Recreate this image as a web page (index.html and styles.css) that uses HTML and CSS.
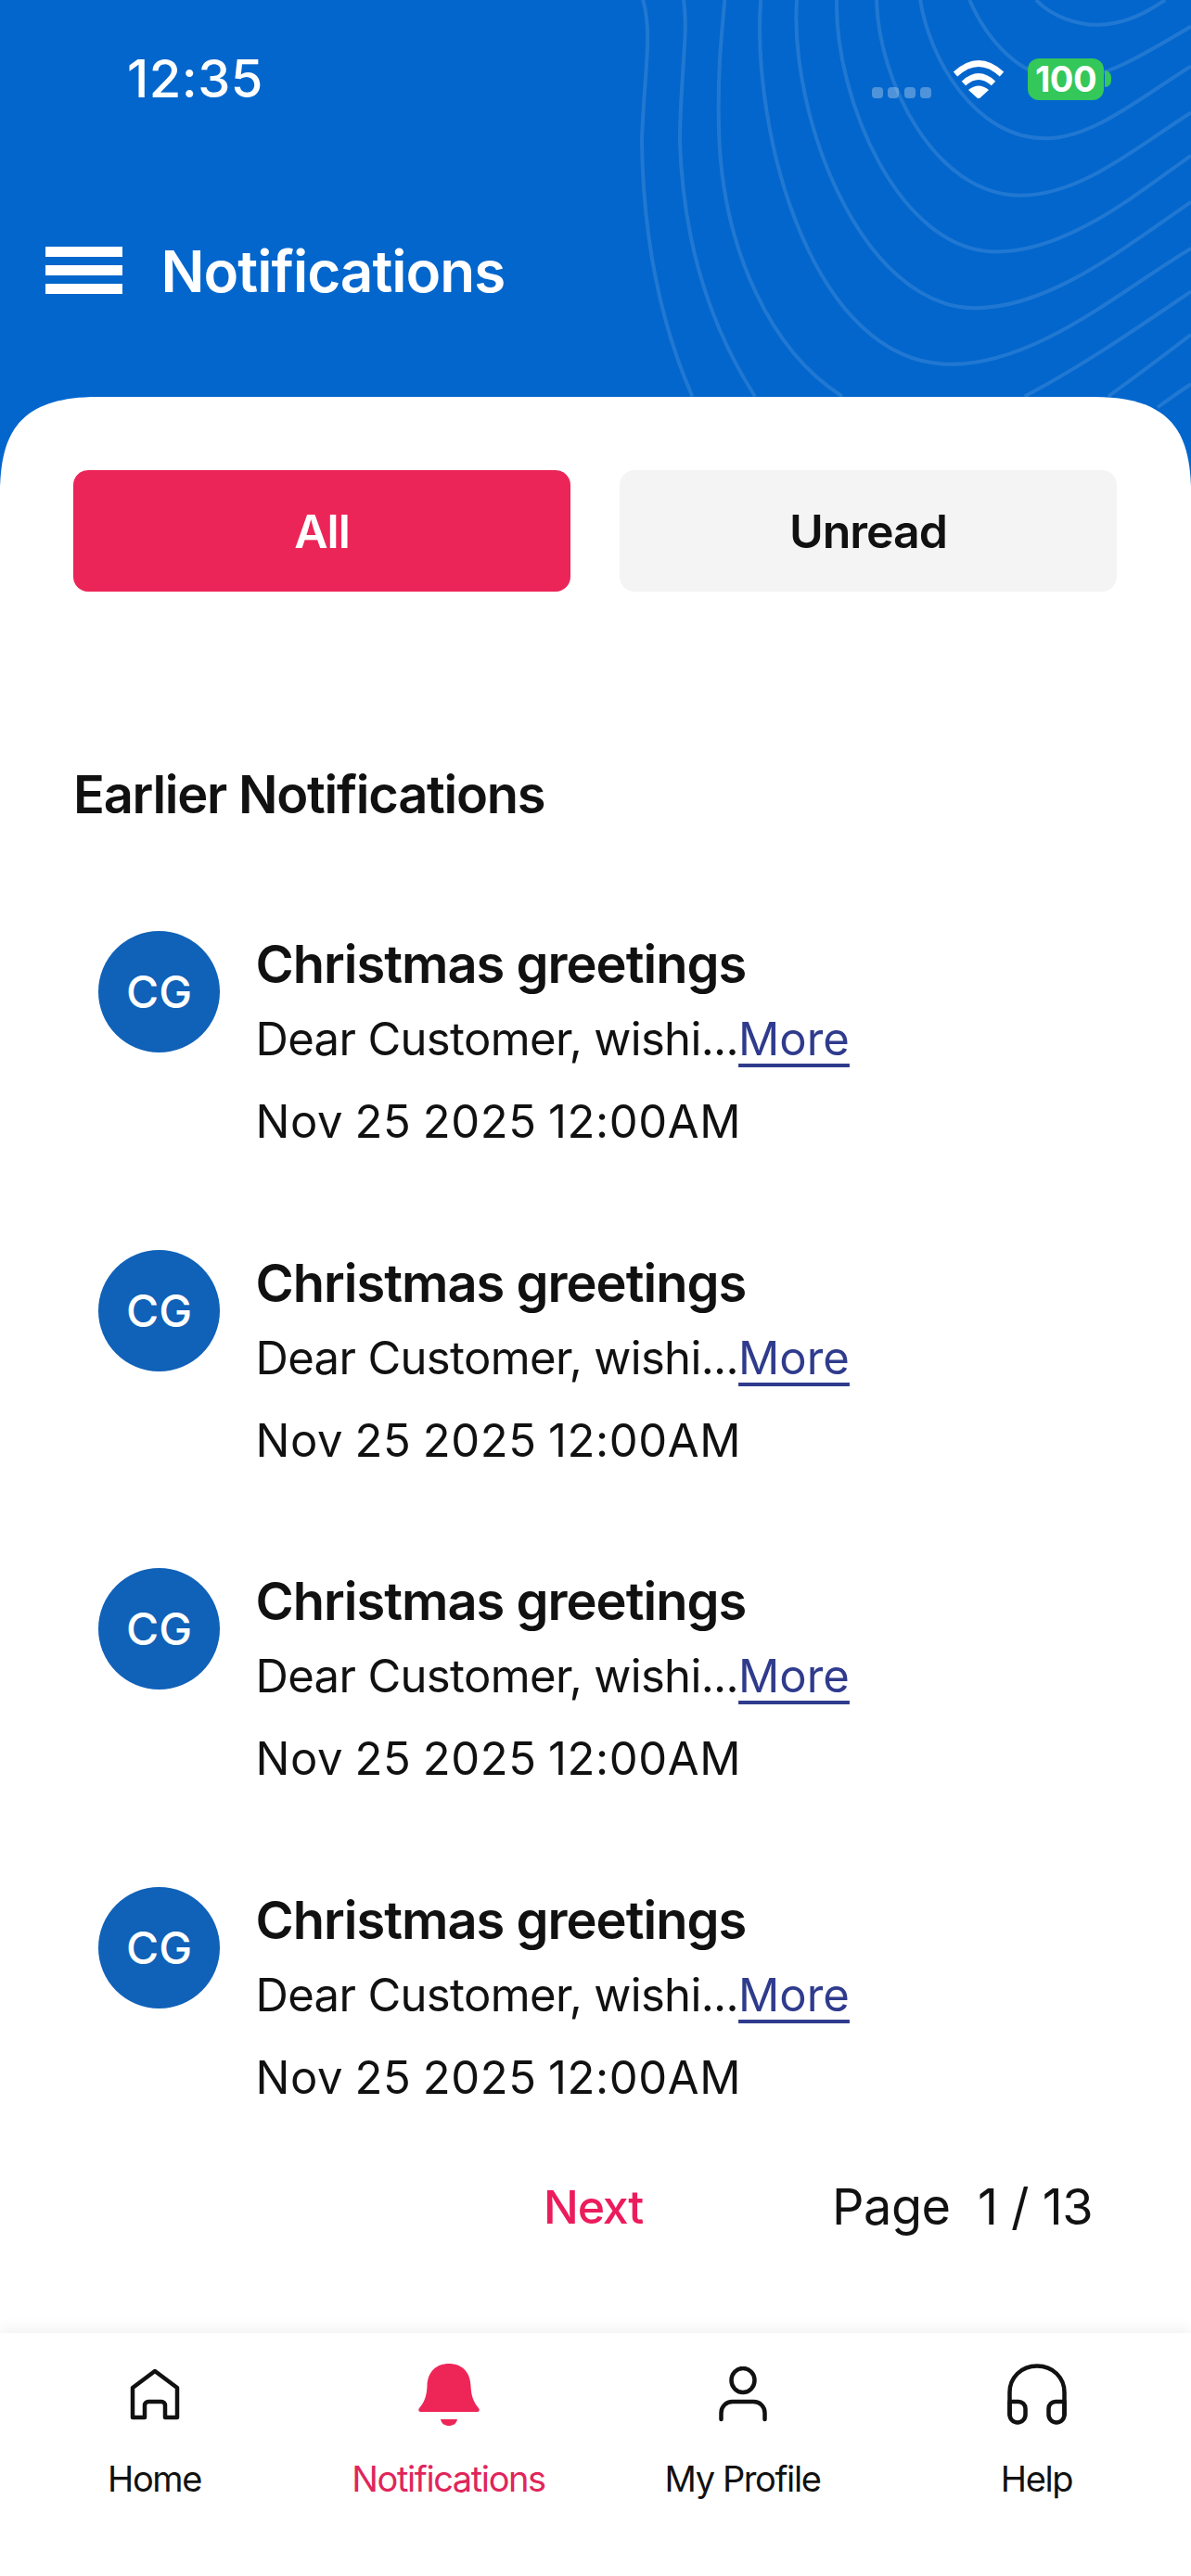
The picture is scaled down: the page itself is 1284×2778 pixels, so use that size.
FILE: index.html
```html
<!DOCTYPE html>
<html lang="en">
<head>
<meta charset="utf-8">
<title>Notifications</title>
<link rel="stylesheet" href="styles.css">
</head>
<body>
<div class="app">
  <header class="header">
    <svg class="contours" viewBox="0 0 1568 1568" preserveAspectRatio="none" aria-hidden="true">
      <path d="M1160 0C1200 50 1270 75 1320 75C1400 75 1460 30 1500 0"/>
      <path d="M985 0C1030 120 1120 240 1240 240C1340 240 1450 160 1568 80"/>
      <path d="M855 0C880 180 1000 418 1185 418C1310 418 1440 290 1568 200"/>
      <path d="M740 0C745 240 890 590 1120 590C1280 590 1430 440 1568 340"/>
      <path d="M635 0C630 300 800 760 1055 760C1240 760 1420 590 1568 470"/>
      <path d="M530 0C510 350 700 930 1000 930C1200 930 1400 740 1568 610"/>
      <path d="M435 0C410 400 570 1100 935 1100C1160 1100 1380 880 1568 750"/>
      <path d="M340 0C335 80 320 200 325 400C335 750 460 1060 650 1197"/>
      <path d="M1130 1197C1290 1100 1440 980 1568 880"/>
      <path d="M232 0C245 100 225 200 222 420C230 750 310 1000 420 1197"/>
      <path d="M1350 1197C1430 1130 1500 1070 1568 1010"/>
      <path d="M125 0C150 100 130 200 122 420C125 750 180 1000 255 1197"/>
      <path d="M1480 1230C1510 1205 1540 1180 1568 1160"/>
    </svg>
    <div class="status">
      <span class="time">12:35</span>
      <div class="status-right">
        <div class="dots"><i></i><i></i><i></i><i></i></div>
        <svg class="wifi" viewBox="0 0 56 42" aria-hidden="true">
          <path class="wifi-arc" d="M3 16Q28 -7 53 16"/>
          <path class="wifi-arc" d="M12 26Q28 11 44 26"/>
          <path class="wifi-dot" d="M17 33Q28 24 39 33L28 43Z"/>
        </svg>
        <div class="battery"><span class="battery-body">100</span><span class="battery-nub"></span></div>
      </div>
    </div>
    <div class="title-row">
      <div class="burger"><span></span><span></span><span></span></div>
      <h1 class="page-title">Notifications</h1>
    </div>
  </header>

  <main class="card">
    <div class="tabs">
      <button class="tab tab-active">All</button>
      <button class="tab">Unread</button>
    </div>
    <h2 class="section">Earlier Notifications</h2>
    <ul class="list">
      <li class="item">
        <div class="avatar">CG</div>
        <div class="item-text">
          <div class="item-title">Christmas greetings</div>
          <div class="item-msg">Dear Customer, wishi...<a class="more">More</a></div>
          <div class="item-date">Nov 25 2025 12:00AM</div>
        </div>
      </li>
      <li class="item">
        <div class="avatar">CG</div>
        <div class="item-text">
          <div class="item-title">Christmas greetings</div>
          <div class="item-msg">Dear Customer, wishi...<a class="more">More</a></div>
          <div class="item-date">Nov 25 2025 12:00AM</div>
        </div>
      </li>
      <li class="item">
        <div class="avatar">CG</div>
        <div class="item-text">
          <div class="item-title">Christmas greetings</div>
          <div class="item-msg">Dear Customer, wishi...<a class="more">More</a></div>
          <div class="item-date">Nov 25 2025 12:00AM</div>
        </div>
      </li>
      <li class="item">
        <div class="avatar">CG</div>
        <div class="item-text">
          <div class="item-title">Christmas greetings</div>
          <div class="item-msg">Dear Customer, wishi...<a class="more">More</a></div>
          <div class="item-date">Nov 25 2025 12:00AM</div>
        </div>
      </li>
    </ul>
    <div class="pager">
      <span class="next">Next</span>
      <span class="page-info">Page&nbsp; 1 / 13</span>
    </div>
  </main>

  <nav class="nav">
    <div class="nav-item">
      <div class="nav-icon">
        <svg class="ico" width="54" height="56" viewBox="0 0 54 56" aria-hidden="true"><path d="M3 53V21L27 3L51 21V53H38V40a4 4 0 0 0-4-4H20a4 4 0 0 0-4 4V53Z"/></svg>
      </div>
      <span class="nav-label">Home</span>
    </div>
    <div class="nav-item nav-active">
      <div class="nav-icon">
        <svg class="ico-fill" width="66" height="67" viewBox="0 0 66 67" aria-hidden="true"><path d="M33 0C20 0 10 8 9.500 24C9 36 6 42 1 48Q-1 51 2 52H64Q67 51 65 48C60 42 57 36 56.500 24C56 8 46 0 33 0Z"/><path d="M24 60H42C41 65 37 67 33 67C29 67 25 65 24 60Z"/></svg>
      </div>
      <span class="nav-label">Notifications</span>
    </div>
    <div class="nav-item">
      <div class="nav-icon">
        <svg class="ico" width="52" height="60" viewBox="0 0 52 60" aria-hidden="true"><ellipse cx="26" cy="15" rx="12.500" ry="13"/><path d="M2.500 57V50a12 12 0 0 1 12-12H37.500a12 12 0 0 1 12 12V57"/></svg>
      </div>
      <span class="nav-label">My Profile</span>
    </div>
    <div class="nav-item">
      <div class="nav-icon">
        <svg class="ico" width="64" height="66" viewBox="0 0 64 66" aria-hidden="true"><path d="M2.500 55V31C2.500 15 15 2.500 32 2.500C49 2.500 61.500 15 61.500 31V55"/><path d="M2.500 41H12a7.500 7.500 0 0 1 7.500 7.500V55a8.500 8.500 0 0 1-17 0Z"/><path d="M61.500 41H52a7.500 7.500 0 0 0-7.500 7.500V55a8.500 8.500 0 0 0 17 0Z"/></svg>
      </div>
      <span class="nav-label">Help</span>
    </div>
  </nav>
</div>
</body>
</html>
```
FILE: styles.css
```css
* { box-sizing: border-box; }
html, body { margin: 0; padding: 0; background: #fff; }
body { font-family: Inter, "Liberation Sans", sans-serif; color: #111; }
.app { width: 1284px; height: 2778px; overflow: hidden; display: flex; flex-direction: column; }

.header { position: relative; height: 525px; background: #0366cc; flex: none; overflow: hidden; }
.contours { position: absolute; top: 0; right: 0; width: 642px; height: 560px; }
.contours path { fill: none; stroke: rgba(255,255,255,.12); stroke-width: 4px; vector-effect: non-scaling-stroke; }

.status { position: relative; height: 170px; padding: 0 86px 0 137px; display: flex; align-items: center; justify-content: space-between; color: #fff; }
.time { font-size: 56px; font-weight: 500; line-height: 1; letter-spacing: .5px; }
.status-right { display: flex; align-items: center; }
.dots { display: flex; gap: 5.500px; margin: 30px 23px 0 0; }
.dots i { display: block; width: 12px; height: 12px; border-radius: 4px; background: rgba(255,255,255,.3); }
.wifi { width: 56px; height: 42px; margin-right: 25px; }
.wifi-arc { fill: none; stroke: #fff; stroke-width: 6.500px; }
.wifi-dot { fill: #fff; }
.battery { display: flex; align-items: center; }
.battery-body { width: 82px; height: 45px; border-radius: 12px; background: #34c759; color: #fff; font-size: 38px; font-weight: 700; line-height: 45px; text-align: center; letter-spacing: -.5px; }
.battery-nub { width: 7px; height: 18px; margin-left: 1px; background: #34c759; border-radius: 0 9px 9px 0; }

.title-row { position: relative; height: 242px; padding-left: 49px; display: flex; align-items: center; gap: 41.500px; }
.burger { width: 83px; display: flex; flex-direction: column; gap: 9px; }
.burger span { display: block; height: 11px; background: #fff; }
.page-title { margin: 3px 0 0; color: #fff; font-size: 62px; font-weight: 600; line-height: 1; letter-spacing: -1px; }

.card { position: relative; flex: none; height: 2088px; margin-top: -97px; padding: 79px 79px 0; background: #fff; clip-path: path("M0 97C2 40 20 0 105 0H1179C1264 0 1282 40 1284 97V2088H0Z"); }
.tabs { display: grid; grid-template-columns: 536px 536px; gap: 53px; }
.tab { height: 131px; border: 0; border-radius: 16px; background: #f4f4f4; color: #111; font-family: inherit; font-size: 50px; font-weight: 600; letter-spacing: -1px; }
.tab-active { background: #ec2558; color: #fff; }
.section { margin: 184px 0 0; font-size: 56px; font-weight: 600; line-height: 70px; letter-spacing: -1.250px; color: #111; }
.list { list-style: none; margin: 112px 0 0; padding: 0; display: flex; flex-direction: column; gap: 101.500px; }
.item { display: flex; gap: 38.500px; padding-left: 27px; height: 242px; }
.avatar { width: 131px; height: 131px; border-radius: 50%; background: #1061b8; color: #fff; font-size: 48px; font-weight: 500; display: flex; align-items: center; justify-content: center; flex: none; }
.item-title { font-size: 56px; font-weight: 600; line-height: 72px; letter-spacing: -1px; color: #111; }
.item-msg { margin-top: 9px; font-size: 49px; line-height: 72px; letter-spacing: -.65px; color: #111; }
.item-date { margin-top: 17px; font-size: 49px; line-height: 72px; letter-spacing: .6px; word-spacing: -2px; color: #111; }
.more { color: #2f3b8c; letter-spacing: 0; text-decoration: underline; text-decoration-thickness: 3.500px; text-underline-offset: 9px; }

.pager { margin-top: 67.500px; padding-right: 27px; display: flex; justify-content: flex-end; gap: 204px; line-height: 72px; }
.next { color: #ec1c5c; font-size: 50px; font-weight: 500; letter-spacing: -1.200px; }
.page-info { color: #111; font-size: 54px; letter-spacing: -.5px; }

.nav { position: relative; flex: none; height: 262px; padding: 31px 8px 0; background: #fff; box-shadow: 0 -6px 14px rgba(0,0,0,.05); display: grid; grid-template-columns: repeat(4, 1fr); align-content: start; }
.nav-item { display: flex; flex-direction: column; align-items: center; }
.nav-icon { height: 70px; display: flex; align-items: center; justify-content: center; }
.ico { fill: none; stroke: #111; stroke-width: 4.500px; stroke-linecap: round; stroke-linejoin: round; }
.ico-fill { fill: #ee2658; }
.nav-label { margin-top: 33px; font-size: 38px; line-height: 46px; letter-spacing: -1.400px; color: #111; }
.nav-active .nav-label { color: #e0255a; }
```
